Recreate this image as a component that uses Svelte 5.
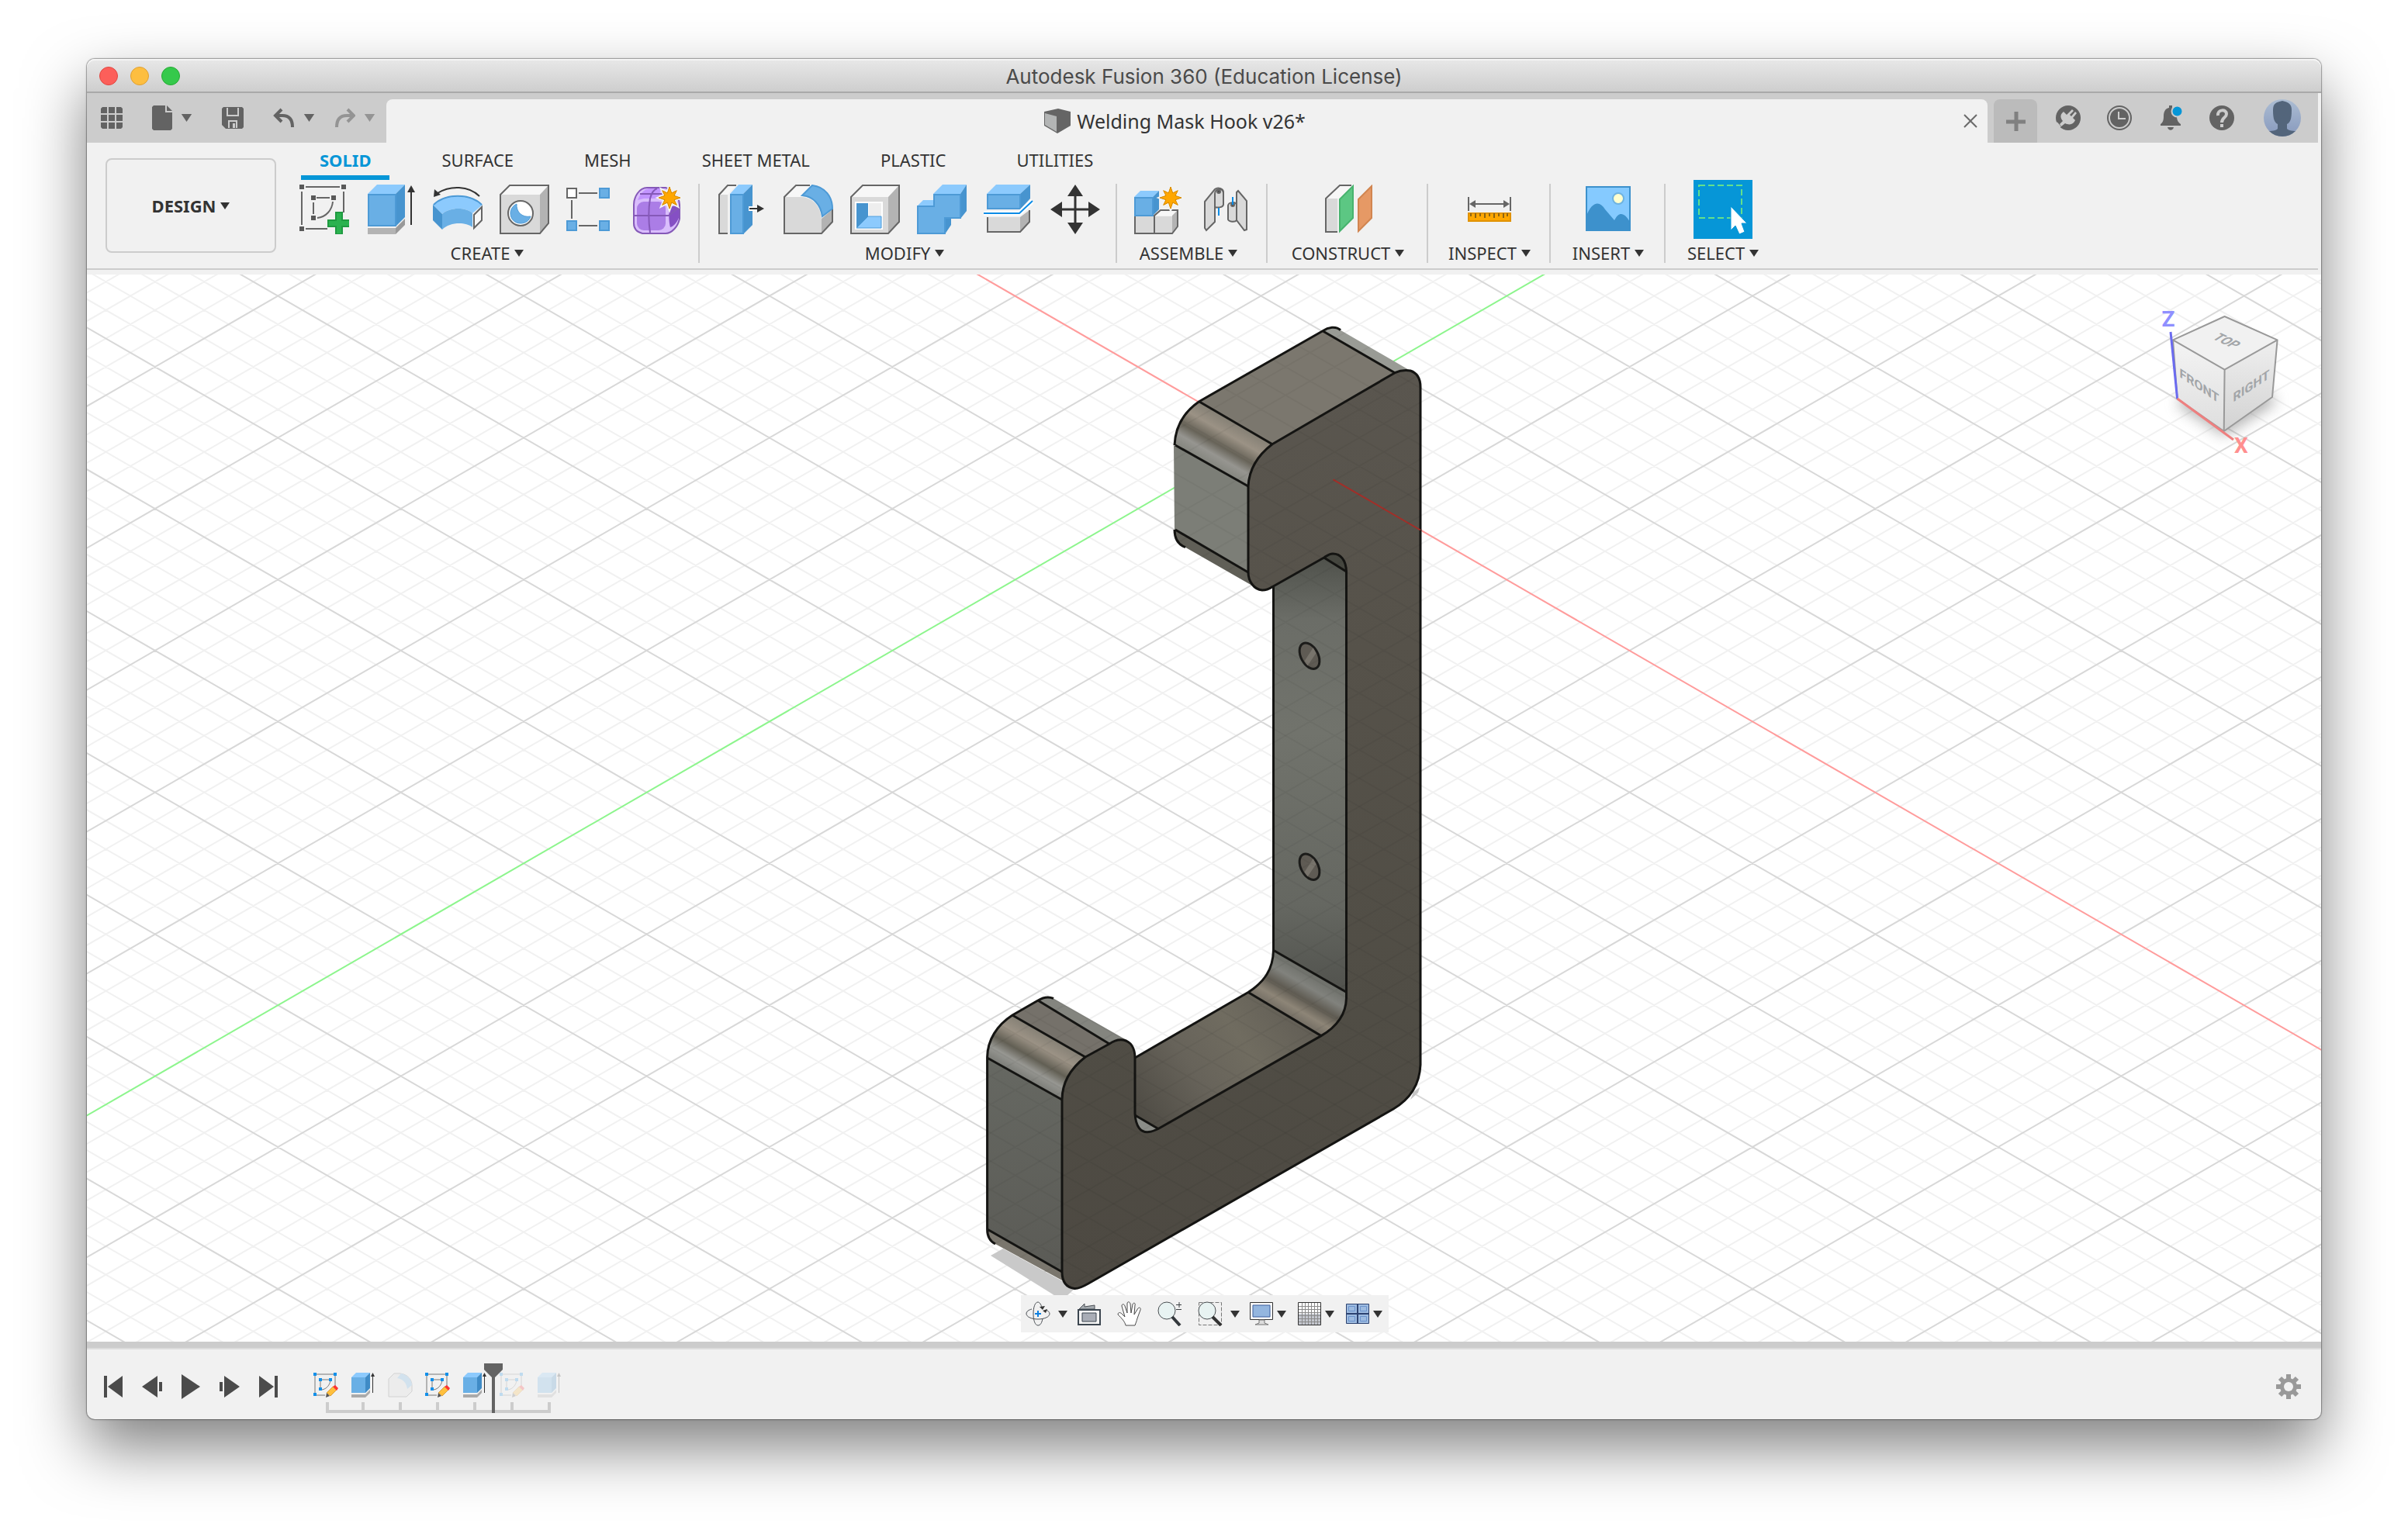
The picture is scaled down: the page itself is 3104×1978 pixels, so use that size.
<script lang="ts">
  const tabs = ['SOLID', 'SURFACE', 'MESH', 'SHEET METAL', 'PLASTIC', 'UTILITIES'];
  let activeTab = $state('SOLID');

  const groups = [
    { label: 'CREATE', tools: ['sketch', 'extrude', 'bend', 'hole', 'pattern', 'form'] },
    { label: 'MODIFY', tools: ['presspull', 'fillet', 'shell', 'combine', 'split', 'move'] },
    { label: 'ASSEMBLE', tools: ['component', 'joint'] },
    { label: 'CONSTRUCT', tools: ['plane'] },
    { label: 'INSPECT', tools: ['measure'] },
    { label: 'INSERT', tools: ['image'] },
    { label: 'SELECT', tools: ['select'] }
  ];

  const features = [
    { kind: 'sketch', state: 'on' },
    { kind: 'extrude', state: 'on' },
    { kind: 'fillet', state: 'dim' },
    { kind: 'sketch', state: 'on' },
    { kind: 'extrude', state: 'on' },
    { kind: 'sketch', state: 'dim' },
    { kind: 'extrude', state: 'dim' }
  ];

  // Isometric ground grid: one major cell is 2*CX by 2*CY, split in five.
  const OX = 1513.4;
  const OY = 210.5;
  const CX = 158.4;
  const CY = 91.45;

  function gridPath(major: boolean): string {
    let d = '';
    const slope = CY / CX;
    for (let i = -130; i <= 130; i++) {
      if ((i % 5 === 0) !== major || i === 0) continue;
      const c = OY + (i * 2 * CY) / 5;
      d += `M-1000 ${(c + slope * (-1000 - OX)).toFixed(1)}L4000 ${(c + slope * (4000 - OX)).toFixed(1)}`;
      d += `M-1000 ${(c - slope * (-1000 - OX)).toFixed(1)}L4000 ${(c - slope * (4000 - OX)).toFixed(1)}`;
    }
    return d;
  }
  const minor = gridPath(false);
  const major = gridPath(true);

  const front =
    'M1640 572.7L1798 480.7C1806 477 1812 477 1818 478C1827 481 1831 488 1831 499V1373C1830 1398 1818 1417 1796 1430L1403 1655C1396 1659 1390 1662 1385 1661.5C1374 1660 1369 1652 1369 1640V1418C1369 1396 1381 1377 1399 1363L1430 1346C1437 1341 1442 1340 1448 1341C1458 1343 1463 1352 1463 1364V1436C1464 1452 1470 1461 1481 1459.6C1486 1459 1490 1457 1493 1455.5L1703 1335.6C1723 1324 1735 1308 1735.5 1287V737C1735 722 1728 714 1718 714C1713 714 1710 717 1706.7 719L1640 756.7C1635 760 1631 761 1627 761C1616 760 1609 749 1609 738V627C1610 606 1620 588 1640 572.7Z';
  const silhouette =
    'M1545.7 517.7L1705 426.7C1712 422 1722 420 1728 425.7L1818 478C1827 481 1831 488 1831 499V1373C1830 1398 1818 1417 1796 1430L1403 1655C1390 1662 1385 1662 1378 1658L1283 1604C1275 1600 1272.6 1593 1272.6 1585V1363C1273 1341 1285 1322 1305 1309L1338 1290C1346 1285 1352 1285 1358 1287.4L1452 1341C1461 1344 1463 1352 1463 1364L1609 1279.5C1630 1266 1641 1250 1641 1226V756L1627 761L1528 705.7C1518 702 1514 693 1514 683V574C1515 552 1525 532 1545.7 517.7Z';
</script>

{#snippet caret()}
  <svg class="caret" viewBox="0 0 12 9" aria-hidden="true"><path d="M0 0H12L6 9Z" fill="currentColor" /></svg>
{/snippet}

{#snippet star()}
  <path
    d="M47 0L50.4 9.2L58.3 5.2L54.8 13.6L63 17L54.8 20.4L58.3 28.8L50.4 24.8L47 34L43.6 24.8L35.7 28.8L39.2 20.4L31 17L39.2 13.6L35.7 5.2L43.6 9.2Z"
    fill="#ffa700" stroke="#f2f2f2" stroke-width="2" />
  <path
    d="M47 3L49.7 11L56.3 7.7L53 14.3L61 17L53 19.7L56.3 26.3L49.7 23L47 31L44.3 23L37.7 26.3L41 19.7L33 17L41 14.3L37.7 7.7L44.3 11Z"
    fill="#ffa700" stroke="#d98c00" />
{/snippet}

{#snippet toolIcon(name: string)}
  <svg viewBox="0 0 64 64" aria-hidden="true">
    {#if name === 'sketch'}
      <path d="M8 3H52M3 9V52M57 9V36M8 57H36M22 17H39M18 23V38M43 22C42 33 34 42 23 43" fill="none" stroke="#666" stroke-width="2" />
      <path d="M0 0h6v6h-6zM54 0h6v6h-6zM0 54h6v6h-6zM15 14h6v6h-6zM41 14h6v6h-6zM15 40h6v6h-6z" fill="#595959" />
      <path d="M47 36h8v10h10v8h-10v10h-8v-10h-10v-8h10z" fill="#2bb24f" stroke="#1f9a41" stroke-width="2" />
    {:else if name === 'extrude'}
      <path d="M2 56H38V64H2Z" fill="#b3b3b3" /><path d="M38 56L50 44V52L38 64Z" fill="#999" />
      <path d="M2 12L14 0H50L38 12Z" fill="#8ccafd" /><path d="M38 12L50 0V42L38 54Z" fill="#4794cf" />
      <path d="M3 13H38V53H3Z" fill="#69afe5" stroke="#4d9ad6" stroke-width="2" />
      <path d="M58 8V52" stroke="#333" stroke-width="2" /><path d="M53 10H63L58 1Z" fill="#333" />
    {:else if name === 'bend'}
      <path d="M60 15C46 1 22 1 6 11" fill="none" stroke="#333" stroke-width="2" /><path d="M1 16L2 6L10 13Z" fill="#333" />
      <path d="M0 26C16 10 48 10 64 26L51 37C42 29 22 29 12 38Z" fill="#8ccafd" />
      <path d="M0 26L12 38V58L0 46Z" fill="#4794cf" />
      <path d="M12 38C22 29 42 29 51 37V55C42 48 22 48 12 58Z" fill="#69afe5" />
      <path d="M1 26C16 11 48 11 63 26" fill="none" stroke="#4d9ad6" stroke-width="2" />
      <path d="M53 39L63 29V46L53 56Z" fill="#f8f8f8" stroke="#666" stroke-width="2" />
    {:else if name === 'hole'}
      <path d="M1 13L13 1H63L52 13Z" fill="#f7f7f7" /><path d="M52 13L63 1V50L52 63Z" fill="#b3b3b3" /><path d="M1 13H52V63H1Z" fill="#d9d9d9" />
      <path d="M1 13L13 1H63V50L52 63H1Z" fill="none" stroke="#666" stroke-width="2" />
      <circle cx="27" cy="37" r="16" fill="#fff" stroke="#666" stroke-width="2" />
      <path d="M22 25C21 35 29 43 40 41C38 47 33 50 27 50C19 50 14 44 14 37C14 32 17 27 22 25Z" fill="#69afe5" stroke="#4d9ad6" />
    {:else if name === 'pattern'}
      <path d="M16 11H40M7 20V44M16 53H40" stroke="#666" stroke-width="2" />
      <path d="M1 5h12v12h-12z" fill="#fff" stroke="#666" stroke-width="2" />
      <path d="M43 5h12v12h-12zM1 47h12v12h-12zM43 47h12v12h-12z" fill="#69afe5" stroke="#4d9ad6" stroke-width="2" />
    {:else if name === 'form'}
      <path d="M1 26C1 16 8 4 18 4H42C50 6 60 16 60 26V44C58 54 50 63 42 63H12C4 61 1 56 1 50Z" fill="#d9bdfc" stroke="#8559b8" stroke-width="2" />
      <path d="M6 20C10 10 16 5 22 5H36C34 14 34 14 32 18H14Z" fill="#c294ff" />
      <rect x="5" y="22" width="37" height="37" rx="9" fill="#ab7de6" />
      <path d="M47 30C52 26 59 28 59 28V43C56 50 52 54 48 55C46 48 46 38 47 30Z" fill="#854fc4" />
      <path d="M2 40H46L59 30M22 62C20 48 20 30 22 18C24 10 28 6 31 5M9 12H38" fill="none" stroke="#8559b8" stroke-width="2" />
      {@render star()}
    {:else if name === 'presspull'}
      <g transform="translate(2 0)">
        <path d="M1 13L12 1H23L12 13V63H1Z" fill="#f7f7f7" /><path d="M1 13H12V63H1Z" fill="#d9d9d9" />
        <path d="M23 1H12L1 13V63H12" fill="none" stroke="#666" stroke-width="2" />
        <path d="M15 12L26 0H44L32 12Z" fill="#8ccafd" /><path d="M32 12L44 0V52L32 64Z" fill="#4794cf" />
        <path d="M16 13H32V63H16Z" fill="#69afe5" stroke="#4d9ad6" stroke-width="2" />
        <path d="M39 31H52" stroke="#fff" stroke-width="6" /><path d="M40 31H52" stroke="#333" stroke-width="2" /><path d="M50 26L59 31L50 36Z" fill="#333" />
      </g>
    {:else if name === 'fillet'}
      <path d="M1 16L16 1H35L25 16Z" fill="#f7f7f7" />
      <path d="M1 16H24C40 18 48 30 49 46V63H1Z" fill="#d9d9d9" /><path d="M49 44L63 32V48L49 63Z" fill="#b3b3b3" />
      <path d="M34 1H16L1 16V63H49L63 48V31" fill="none" stroke="#666" stroke-width="2" />
      <path d="M24 14L37 1C54 3 63 16 63 31L50 41C48 26 38 15 24 14Z" fill="#69afe5" stroke="#4d9ad6" stroke-width="2" />
    {:else if name === 'shell'}
      <path d="M1 16L16 1H63L49 16Z" fill="#f7f7f7" /><path d="M49 16L63 1V48L49 63Z" fill="#b3b3b3" /><path d="M1 16H49V63H1Z" fill="#d9d9d9" />
      <path d="M1 16L16 1H63V48L49 63H1Z" fill="none" stroke="#666" stroke-width="2" />
      <path d="M6 22H42V58H6Z" fill="#fff" /><path d="M8 24H23V42L8 56Z" fill="#4794cf" /><path d="M8 56L23 41H40V56Z" fill="#8ccafd" stroke="#4d9ad6" />
      <path d="M24 24H40V40H24Z" fill="#eee" />
    {:else if name === 'combine'}
      <path d="M21 12L33 0H64L56 12Z" fill="#8ccafd" /><path d="M0 28L8 20H21V28Z" fill="#8ccafd" />
      <path d="M56 12L64 0V34L56 44H44V52L36 64V44H56Z" fill="#4794cf" />
      <path d="M22 13H56V43H36V63H1V28H22Z" fill="#69afe5" stroke="#4d9ad6" stroke-width="2" />
    {:else if name === 'split'}
      <path d="M4 12L16 0H60L47 12Z" fill="#8ccafd" /><path d="M47 12L60 0V18L47 32Z" fill="#4794cf" /><path d="M5 13H47V31H5Z" fill="#69afe5" stroke="#4d9ad6" stroke-width="2" />
      <path d="M47 42L59 33V47L47 61Z" fill="#b3b3b3" /><path d="M5 42H47V61H5Z" fill="#d9d9d9" />
      <path d="M5 42V61H47L59 48V33" fill="none" stroke="#666" stroke-width="2" />
      <path d="M0 37H46L63 21" fill="none" stroke="#fff" stroke-width="6" /><path d="M0 37H46L63 21" fill="none" stroke="#0d8ce6" stroke-width="2" />
    {:else if name === 'move'}
      <path d="M32 10V54M10 32H54" stroke="#333" stroke-width="3" />
      <path d="M32 0L42 15H22ZM32 64L42 49H22ZM0 32L15 22V42ZM64 32L49 22V42Z" fill="#333" />
    {:else if name === 'component'}
      <path d="M0 16L8 8H32L24 16Z" fill="#8ccafd" /><path d="M24 16L32 8V32L24 40Z" fill="#4794cf" /><path d="M1 17H24V40H1Z" fill="#69afe5" stroke="#4d9ad6" stroke-width="2" />
      <path d="M26 40L34 33H56L49 40Z" fill="#f7f7f7" /><path d="M49 40L56 33V54L49 63Z" fill="#b3b3b3" /><path d="M1 41H49V63H1Z" fill="#d9d9d9" />
      <path d="M1 41V63H49L56 54V33H34L26 40V63" fill="none" stroke="#666" stroke-width="2" />
      {@render star()}
    {:else if name === 'joint'}
      <g transform="translate(4 0)" stroke="#666" stroke-width="2">
        <path d="M1 22L14 6C18 3 25 5 25 10V26C24 30 17 30 14 29V48L3 59L1 56Z" fill="#d9d9d9" />
        <path d="M14 12V30M14 12C14 4 25 4 25 11" fill="none" /><circle cx="19" cy="9" r="2" fill="#444" />
        <path d="M42 26V10L44 8L55 21V58L52 59L42 46C40 49 32 48 31 45V27C32 22 41 22 42 26Z" fill="#d9d9d9" />
        <path d="M42 26V46" fill="none" /><circle cx="37" cy="26" r="2" fill="#444" />
        <path d="M19 30V40M37 16V26" stroke="#0d8ce6" />
      </g>
    {:else if name === 'plane'}
      <g transform="translate(2 0)">
        <path d="M1 18L19 1H35L18 18Z" fill="#f7f7f7" /><path d="M1 18H16V61H1Z" fill="#d9d9d9" /><path d="M34 1H19L1 18V61H16" fill="none" stroke="#666" stroke-width="2" />
        <path d="M19 19L36 2V43L19 60Z" fill="#5cc783" stroke="#47b36e" stroke-width="2" /><path d="M43 19L60 2V43L43 60Z" fill="#e69965" stroke="#d18550" stroke-width="2" />
      </g>
    {:else if name === 'measure'}
      <g transform="translate(4 0)">
        <path d="M1 16V34M55 16V34M6 25H50" stroke="#666" stroke-width="2" /><path d="M2 25L10 20V30ZM54 25L46 20V30Z" fill="#666" />
        <path d="M1 37H55V47H1Z" fill="#ffa700" stroke="#e09200" stroke-width="2" />
        <path d="M4 37V41M10 37V43M16 37V41M22 37V43M28 37V41M34 37V43M40 37V41M46 37V43M51 37V41" stroke="#8c6414" stroke-width="2" />
      </g>
    {:else if name === 'image'}
      <g transform="translate(3 0)">
        <path d="M1 3H57V59H1Z" fill="#85caff" stroke="#3d91cc" stroke-width="2" />
        <circle cx="42" cy="18" r="7" fill="#ffffcf" stroke="#6fb3e0" stroke-width="2" />
        <path d="M1 40C8 22 18 20 25 32L37 46C43 34 50 36 57 48V59H1Z" fill="#3d91cc" />
      </g>
    {/if}
  </svg>
{/snippet}

{#snippet featureIcon(name: string)}
  <svg viewBox="0 0 32 32" aria-hidden="true">
    {#if name === 'sketch'}
      <path d="M3 2H26M2 4V27M28 4V17M4 29H15M10 9H20M9 11V19M22 10C21 16 17 21 11 22" fill="none" stroke="#777" />
      <path d="M0 0h4v4h-4zM26 0h4v4h-4zM0 26h4v4h-4zM7 7h4v4h-4zM20 7h4v4h-4zM7 19h4v4h-4z" fill="#1290ea" />
      <path d="M17 26L25 18L30 22L22 30Z" fill="#ffbf3d" stroke="#d9a040" /><path d="M25 18L28 16L32 20L30 23Z" fill="#f33" /><path d="M16 32L17 26L21 30Z" fill="#555" />
    {:else if name === 'extrude'}
      <path d="M1 28H19L25 22V26L19 32H1Z" fill="#aaa" /><path d="M1 6L7 0H25L19 6Z" fill="#8ccafd" /><path d="M19 6L25 0V20L19 26Z" fill="#3f8bc6" /><path d="M1 6H19V26H1Z" fill="#69afe5" />
      <path d="M28.500 4V26" stroke="#333" /><path d="M26 5L28.500 0L31 5Z" fill="#333" />
    {:else}
      <path d="M1 8L8 1H16C26 2 31 10 31 16V24L24 31H1Z" fill="#ddd" stroke="#666" /><path d="M12 7L17 1C26 3 31 10 31 16L25 21C24 13 19 8 12 7Z" fill="#69afe5" />
    {/if}
  </svg>
{/snippet}

<div class="desktop">
  <main class="window">
    <header class="titlebar">
      <div class="lights">
        <button class="light close" aria-label="Close"></button>
        <button class="light minimize" aria-label="Minimize"></button>
        <button class="light zoom" aria-label="Zoom"></button>
      </div>
      <h1>Autodesk Fusion 360 (Education License)</h1>
    </header>

    <div class="strip">
      <div class="quick">
        <button class="q-grid" aria-label="Data panel">
          <svg viewBox="0 0 28 28" width="28" height="28"><path d="M2 0h6v8h-8v-6zM10 0h8v8h-8zM20 0h6l2 2v6h-8zM0 10h8v8h-8zM10 10h8v8h-8zM20 10h8v8h-8zM0 20h8v8h-6l-2-2zM10 20h8v8h-8zM20 20h8v6l-2 2h-6z" fill="#636363" /></svg>
        </button>
        <button class="q-file" aria-label="File">
          <svg viewBox="0 0 26 32" width="26" height="32"><path d="M2 0H17V9H26V30L24 32H2L0 30V2Z" fill="#636363" /><path d="M19 0L26 7H19Z" fill="#636363" /></svg>
          {@render caret()}
        </button>
        <button class="q-save" aria-label="Save">
          <svg viewBox="0 0 28 28" width="28" height="28"><path d="M2 0H26L28 2V26L26 28H5L0 23V2Z" fill="#636363" /><path d="M7 1V11H21V1M9 27V18H19V27" fill="none" stroke="#ccc" stroke-width="2" /><path d="M14 21h3v6h-3z" fill="#ccc" /></svg>
        </button>
        <button class="q-undo" aria-label="Undo">
          <svg viewBox="0 0 28 26" width="28" height="26"><path d="M11 2L3 10L11 18M4 10H12C21 10 25 15 25 25" fill="none" stroke="#636363" stroke-width="4" /></svg>
          {@render caret()}
        </button>
        <button class="q-redo" aria-label="Redo">
          <svg viewBox="0 0 28 26" width="28" height="26"><path d="M18 2L26 10L18 18M25 10H17C8 10 4 15 4 25" fill="none" stroke="#949494" stroke-width="4" /></svg>
          {@render caret()}
        </button>
      </div>
      <div class="doc-tab">
        <div class="doc-name">
          <svg viewBox="0 0 34 32" width="34" height="32"><path d="M0 4L18 0L34 4V22L17 32L0 22Z" fill="#656565" /><path d="M1 6L16 10V30L1 21Z" fill="#b3b5b5" /></svg>
          <span>Welding Mask Hook v26*</span>
        </div>
        <button class="doc-close" aria-label="Close document">
          <svg viewBox="0 0 18 18" width="18" height="18"><path d="M1 1L17 17M17 1L1 17" stroke="#6b6b6b" stroke-width="2" /></svg>
        </button>
      </div>
      <button class="doc-new" aria-label="New design">
        <svg viewBox="0 0 26 26" width="26" height="26"><path d="M14 1V26M1 14H26" stroke="#808080" stroke-width="5" /></svg>
      </button>
      <div class="status">
        <button aria-label="Extensions">
          <svg viewBox="0 0 32 32" width="32" height="32"><circle cx="16" cy="16" r="16" fill="#636363" /><path d="M5 24L9 20C5 15 6 11 10 8L14 12L21 5L23 7L18 12L20 14L25 8L27 10L22 16L25 19C23 24 18 26 12 23L7 27Z" fill="#ccc" /><path d="M1 22L6 28" stroke="#ccc" stroke-width="2" /></svg>
        </button>
        <button aria-label="Job status">
          <svg viewBox="0 0 32 32" width="32" height="32"><circle cx="16" cy="16" r="15" fill="#ccc" stroke="#636363" stroke-width="2" /><circle cx="16" cy="16" r="12" fill="#636363" /><path d="M15 8V17H24" fill="none" stroke="#ccc" stroke-width="2" /></svg>
        </button>
        <button aria-label="Notifications">
          <svg viewBox="0 0 32 32" width="32" height="32"><path d="M14 0H18V3C23 4 24 8 24 14C24 19 26 22 29 24V26H3V24C6 22 7 19 7 14C7 8 9 4 14 3ZM12 28H20C19 33 13 33 12 28Z" fill="#636363" /><circle cx="24.500" cy="7.500" r="7" fill="#0696d7" stroke="#ccc" stroke-width="2" /></svg>
        </button>
        <button aria-label="Help">
          <svg viewBox="0 0 32 32" width="32" height="32"><circle cx="16" cy="16" r="16" fill="#636363" /><path d="M11 13C10 5 22 4 22 11C22 16 16 15 16 22M16 24V28" fill="none" stroke="#ccc" stroke-width="4" /></svg>
        </button>
        <button class="avatar" aria-label="Account">
          <svg viewBox="0 0 48 48" width="48" height="48"><defs><linearGradient id="sky" x2="0" y2="1"><stop stop-color="#acbdd3" /><stop offset="1" stop-color="#8799bd" /></linearGradient><clipPath id="disc"><circle cx="24" cy="24" r="24" /></clipPath></defs><g clip-path="url(#disc)"><path d="M0 0H48V48H0Z" fill="url(#sky)" /><path d="M12 14C12 5 16 4 24 2C32 4 36 6 36 14C36 26 34 30 30 32V38C34 42 40 40 48 42V48H0V42C8 40 14 42 18 38V32C14 30 12 26 12 14Z" fill="#53657b" /></g></svg>
        </button>
      </div>
    </div>

    <section class="ribbon" aria-label="Toolbar">
      <button class="workspace">DESIGN {@render caret()}</button>
      <div class="ribbon-main">
        <nav class="tabs">
          {#each tabs as tab}
            <button class="tab" class:active={tab === activeTab} onclick={() => (activeTab = tab)}>{tab}</button>
          {/each}
        </nav>
        <div class="groups">
          {#each groups as group}
            <div class="group" class:many={group.tools.length > 1}>
              <div class="tools">
                {#each group.tools as tool}
                  {#if tool === 'select'}
                    <button class="tool selected" aria-label="Select">
                      <svg viewBox="0 0 76 76" aria-hidden="true"><path d="M7 7H62V49H7Z" fill="none" stroke="#63e08c" stroke-width="2" stroke-dasharray="8 4" /><path d="M48 34L69 56H62L66 67L59 70L54 59L48 65Z" fill="#fff" stroke="#0696d7" /></svg>
                    </button>
                  {:else}
                    <button class="tool" aria-label={tool}>{@render toolIcon(tool)}</button>
                  {/if}
                {/each}
              </div>
              <button class="group-label">{group.label}{@render caret()}</button>
            </div>
          {/each}
        </div>
      </div>
    </section>

    <section class="viewport" aria-label="Model view">
      <svg class="scene" viewBox="0 0 2880 1376" preserveAspectRatio="xMidYMid slice" role="img" aria-label="Welding mask hook model">
        <defs>
          <clipPath id="solid"><path d={silhouette} transform="translate(-112 -354)" /></clipPath>
          <linearGradient id="body" gradientUnits="userSpaceOnUse" x1="0" y1="480" x2="0" y2="1660"><stop stop-color="#5a564f" /><stop offset=".3" stop-color="#56524a" /><stop offset=".7" stop-color="#504d45" /><stop offset="1" stop-color="#4d4942" /></linearGradient>
          <linearGradient id="bandA" gradientUnits="userSpaceOnUse" x1="1640" y1="573" x2="1609" y2="627"><stop stop-color="#858075" /><stop offset=".28" stop-color="#9b9285" /><stop offset=".56" stop-color="#676358" /><stop offset=".78" stop-color="#969590" /><stop offset="1" stop-color="#85867f" /></linearGradient>
          <linearGradient id="bandB" gradientUnits="userSpaceOnUse" x1="1399" y1="1363" x2="1368" y2="1417"><stop stop-color="#858075" /><stop offset=".28" stop-color="#9b9285" /><stop offset=".56" stop-color="#625f54" /><stop offset=".78" stop-color="#979792" /><stop offset="1" stop-color="#7d7e79" /></linearGradient>
          <linearGradient id="bandC" gradientUnits="userSpaceOnUse" x1="1735" y1="1279" x2="1703" y2="1334"><stop stop-color="#6c6e68" /><stop offset=".3" stop-color="#81827d" /><stop offset=".55" stop-color="#5f5b52" /><stop offset=".8" stop-color="#8d8577" /><stop offset="1" stop-color="#756f65" /></linearGradient>
          <linearGradient id="wall" gradientUnits="userSpaceOnUse" x1="0" y1="720" x2="0" y2="1280"><stop stop-color="#50524c" /><stop offset=".14" stop-color="#6b6d67" /><stop offset=".4" stop-color="#71736c" /><stop offset=".8" stop-color="#656761" /><stop offset="1" stop-color="#51524d" /></linearGradient>
          <linearGradient id="floor" gradientUnits="userSpaceOnUse" x1="1463" y1="1440" x2="1660" y2="1300"><stop stop-color="#4d4a43" /><stop offset=".4" stop-color="#67635a" /><stop offset=".7" stop-color="#706c60" /><stop offset="1" stop-color="#646057" /></linearGradient>
          <linearGradient id="sideLow" x2="0" y2="1"><stop stop-color="#666862" /><stop offset="1" stop-color="#5b5b56" /></linearGradient>
        </defs>
        <path d={minor} class="line minor" />
        <path d={major} class="line major" />
        <g transform="translate(-112 -354)">
          <path d="M-1000 2080.500L4000 -806.600" stroke="#8df58d" stroke-width="2" />
          <path d="M-1000 -951L4000 1935.500" stroke="#ff9c9c" stroke-width="2" />
          <path d="M1277 1619L1293 1610L1386 1661L1374 1672H1362Z" fill="#c9c9c9" />
          <path d="M1822 1408L1830 1402L1828 1409L1818 1418Z" fill="#c4c4c4" />

          <path d="M1545.700 517.700L1705 426.700L1798 480.700L1640 572.700Z" fill="#7b776e" />
          <path d="M1705 426.700C1712 422 1722 420 1728 425.700L1818 478C1811 477 1805 477 1798 480.700Z" fill="#999b95" />
          <path d="M1545.700 517.700C1525 532 1515 552 1514 574L1609 627C1610 606 1620 588 1640 572.700Z" fill="url(#bandA)" />
          <path d="M1513 574L1609 627V738L1514 683Z" fill="#7c7e77" />
          <path d="M1514 683L1609 738C1609 745 1611 750 1614 755L1528 705.700C1518 702 1514 693 1514 683Z" fill="#605f57" />
          <path d="M1641 700H1736V1279L1641 1225Z" fill="url(#wall)" />
          <path d="M1706 719L1735.500 737C1735 722 1724 708 1706 719Z" fill="#45463f" />
          <path d="M1641 1225L1735.500 1279C1735 1308 1723 1324 1703 1335.600L1609 1279.500C1630 1266 1641 1250 1641 1225Z" fill="url(#bandC)" />
          <path d="M1609 1279.500L1703 1335.600L1493 1455.500L1463 1438V1364Z" fill="url(#floor)" />
          <path d="M1463 1438L1493 1455.500L1481 1460C1470 1461 1464 1452 1463 1438Z" fill="#8b8d88" />
          <path d="M1305 1309L1338 1290L1430 1346L1399 1363Z" fill="#75716a" />
          <path d="M1338 1290C1346 1285 1352 1285 1358 1287.400L1452 1341C1442 1340 1437 1341 1430 1346Z" fill="#84857f" />
          <path d="M1305 1309C1285 1322 1273 1341 1272.600 1363L1369 1418C1369 1396 1381 1377 1399 1363Z" fill="url(#bandB)" />
          <path d="M1272.600 1363L1369 1418V1640L1272.600 1585Z" fill="url(#sideLow)" />
          <path d="M1272.600 1585L1369 1640L1371 1652L1283 1604C1275 1600 1272.600 1593 1272.600 1585Z" fill="#7a766d" />
          <path d={front} fill="url(#body)" />

          <g class="edges">
            <path d={front} />
            <path d="M1514 574C1515 552 1525 532 1545.700 517.700L1705 426.700C1712 422 1722 420 1728 425.700M1545.700 517.700L1640 572.700M1705 426.700L1798 480.700M1515 574L1609 627M1515 683L1609 738M1514 683C1514 693 1518 702 1528 705.700" />
            <path d="M1641.500 757V1225C1641 1250 1630 1266 1609 1279.500L1463 1364M1641 1225L1735 1279M1609 1279.500L1703 1335.600M1706.700 719L1735.500 737M1463 1438L1493 1455.500" />
            <path d="M1283 1604C1275 1600 1272.600 1593 1272.600 1585V1363C1273 1341 1285 1322 1305 1309L1338 1290C1346 1285 1352 1285 1358 1287.400M1305 1309L1399 1363M1338 1290L1430 1346M1272.600 1364L1369 1418M1272.600 1585L1369 1640" />
          </g>
          {#each [845.7, 1117.7] as cy}
            <g transform="translate(1688 {cy}) rotate(-28)">
              <ellipse rx="11" ry="18" fill="#5f5b54" stroke="#1c1c1a" stroke-width="3" />
              <path d="M-9 3L9 -7V1L-8 10Z" fill="#78746c" />
            </g>
          {/each}
          <path d="M1718.500 618.300L1831 683.500" stroke="#a32e28" stroke-width="2" />
        </g>
        <g clip-path="url(#solid)">
          <path d={minor} class="line over" />
          <path d={major} class="line over" />
        </g>
      </svg>

      <svg class="cube" viewBox="2780 390 170 210" width="170" height="210" role="img" aria-label="View cube">
        <defs>
          <filter id="soft" x="-40%" y="-40%" width="180%" height="180%"><feGaussianBlur stdDeviation="9" /></filter>
          <linearGradient id="cf" x2="0" y2="1"><stop stop-color="#f4f4f4" /><stop offset="1" stop-color="#dedede" /></linearGradient>
          <linearGradient id="cr" x2="0" y2="1"><stop stop-color="#efefef" /><stop offset="1" stop-color="#d2d2d2" /></linearGradient>
        </defs>
        <path d="M2806 522L2867 562L2936 518L2900 490H2830Z" fill="#777" opacity=".55" filter="url(#soft)" />
        <path d="M2867.600 408L2935.600 438.400L2867.600 476.600L2801 438.400Z" fill="#f1f1f1" />
        <path d="M2801 438.400L2867.600 476.600L2866.700 556L2806.600 514Z" fill="url(#cf)" />
        <path d="M2867.600 476.600L2935.600 438.400L2929 512L2866.700 556Z" fill="url(#cr)" />
        <path d="M2801 438.400L2867.600 408L2935.600 438.400L2929 512L2866.700 556L2806.600 514ZM2801 438.400L2867.600 476.600L2935.600 438.400M2867.600 476.600L2866.700 556" fill="none" stroke="#999" stroke-width="2" stroke-linejoin="round" />
        <g class="cube-text">
          <text transform="translate(2835 503) skewY(34)">FRONT</text>
          <text transform="translate(2902 503) skewY(-34)">RIGHT</text>
          <text transform="translate(2865 443) rotate(26) skewX(-32)">TOP</text>
        </g>
        <path d="M2798 428L2806.600 514" stroke="#6b6bf0" stroke-width="3" />
        <path d="M2806.600 514L2879 567" stroke="#ee7f7f" stroke-width="3" />
        <text class="axis" x="2795" y="421" fill="#8f8fff">Z</text>
        <text class="axis" x="2889" y="584" fill="#ff8f8f">X</text>
      </svg>

      <div class="navbar">
        <button aria-label="Orbit">
          <svg viewBox="0 0 32 32"><g fill="none" stroke="#4a4f54"><path d="M22 22C21 28 19 31 16 31C12 31 10 24 10 16C10 8 12 1 16 1C18 1 20 4 21 8" /><path d="M8 10C4 11 1 13 1 16C1 20 8 23 16 23C24 23 31 20 31 16C31 14 29 12 26 11" /></g><path d="M18 7L25 6L22 11ZM22 12L28 10L26 15Z" fill="#333" /><path d="M16 12V20M12 16H20" stroke="#0d7fe0" stroke-width="2" /></svg>
        </button>
        <button class="drop wide" aria-label="Orbit options">{@render caret()}</button>
        <button aria-label="Look at">
          <svg viewBox="0 0 32 32"><path d="M3 10L10 3V7L23 5V10Z" fill="#a5abb0" stroke="#4a4f54" /><path d="M2 11H30V30H2Z" fill="#f4f4f4" stroke="#3c4650" stroke-width="2" /><path d="M7 15H25V26H7Z" fill="#a9adb6" stroke="#3c4650" /></svg>
        </button>
        <button class="apart" aria-label="Pan">
          <svg viewBox="0 0 32 32"><path d="M11 31C10 26 6 22 1 17C1 14 4 14 6 16L10 20L6 6C6 3 9 3 10 6L13 15L13 3C13 0 16 0 17 3L18 15L20 4C21 1 24 2 23 5L22 17L27 9C29 7 31 9 30 11L26 22C25 26 24 28 23 31Z" fill="#fff" stroke="#4a4a4a" /></svg>
        </button>
        <button class="apart" aria-label="Zoom">
          <svg viewBox="0 0 32 32"><circle cx="12" cy="12" r="11" fill="#e8f3f2" stroke="#4a4f52" /><path d="M19 20L29 31" stroke="#33383c" stroke-width="4" /><path d="M28 1V8M24 4.500H31M24 10.500H31" stroke="#3c4043" /></svg>
        </button>
        <button class="apart" aria-label="Fit">
          <svg viewBox="0 0 32 32"><path d="M1.500 1.500H30.500V30.500H1.500Z" fill="none" stroke="#777" stroke-dasharray="5 2" /><circle cx="12" cy="12" r="11" fill="#e8f3f2" stroke="#4a4f52" /><path d="M19 20L30 31" stroke="#333" stroke-width="4" /></svg>
        </button>
        <button class="drop wide" aria-label="Fit options">{@render caret()}</button>
        <button aria-label="Display settings">
          <svg viewBox="0 0 32 32"><path d="M1.500 1.500H30.500V23.500H1.500Z" fill="#f7f7f7" stroke="#333" /><path d="M5 5H27V20H5Z" fill="#94b6df" stroke="#3a5ea0" /><path d="M13 24H20V28L25 30H8L13 28Z" fill="#ddd" stroke="#777" /></svg>
        </button>
        <button class="drop" aria-label="Display options">{@render caret()}</button>
        <button aria-label="Grid and snaps">
          <svg viewBox="0 0 32 32"><path d="M2 2H30V30H2Z" fill="#fff" /><path d="M2 16H30V30H2Z" fill="#c3c6ce" /><path d="M6.500 2V30M10.500 2V30M14.500 2V30M18.500 2V30M22.500 2V30M26.500 2V30M2 6.500H30M2 10.500H30M2 14.500H30M2 18.500H30M2 22.500H30M2 26.500H30" stroke="#8a8a8a" /><path d="M1.500 1.500H30.500V30.500H1.500Z" fill="none" stroke="#333" /></svg>
        </button>
        <button class="drop" aria-label="Grid options">{@render caret()}</button>
        <button aria-label="Viewports">
          <svg viewBox="0 0 32 32"><path d="M1.500 3.500H30.500V28.500H1.500Z" fill="#9dbbe0" stroke="#2c4270" /><path d="M16 4V28M2 16H30" stroke="#2c4270" stroke-width="2" /><path d="M4.500 6.500H12.500V12.500H4.500ZM19.500 6.500H27.500V12.500H19.500ZM4.500 19.500H12.500V25.500H4.500ZM19.500 19.500H27.500V25.500H19.500Z" fill="none" stroke="#6b93cc" /></svg>
        </button>
        <button class="drop" aria-label="Viewport options">{@render caret()}</button>
      </div>
    </section>

    <footer class="timeline">
      <div class="playback">
        <button aria-label="To beginning"><svg viewBox="0 0 32 32"><path d="M4 2H8V30H4ZM28 2V30L9 16Z" fill="#4b4b4b" /></svg></button>
        <button aria-label="Step back"><svg viewBox="0 0 32 32"><path d="M3 16L23 2V30ZM25 10H29V22H25Z" fill="#4b4b4b" /></svg></button>
        <button aria-label="Play"><svg viewBox="0 0 32 32"><path d="M4 0L28 16L4 32Z" fill="#4b4b4b" /></svg></button>
        <button aria-label="Step forward"><svg viewBox="0 0 32 32"><path d="M3 10H7V22H3ZM9 2L29 16L9 30Z" fill="#4b4b4b" /></svg></button>
        <button aria-label="To end"><svg viewBox="0 0 32 32"><path d="M4 2L23 16L4 30ZM24 2H28V30H24Z" fill="#4b4b4b" /></svg></button>
      </div>
      <div class="history">
        {#each features as feature}
          <div class="feature">
            <button class:dim={feature.state === 'dim'} aria-label={feature.kind}>{@render featureIcon(feature.kind)}</button>
            <span class="tick"></span>
          </div>
        {/each}
        <svg class="marker" viewBox="0 0 24 64" width="24" height="64" aria-hidden="true"><path d="M0 0H24V8L14 18V64H10V18L0 8Z" fill="#636363" /></svg>
      </div>
      <button class="gear" aria-label="Timeline settings">
        <svg viewBox="0 0 32 32" width="32" height="32"><path d="M16 0V32M0 16H32M5 5L27 27M27 5L5 27" stroke="#999" stroke-width="6" /><circle cx="16" cy="16" r="11" fill="#999" /><circle cx="16" cy="16" r="6" fill="#f1f1f1" /></svg>
      </button>
    </footer>
  </main>
</div>

<style>
  :global(body) { margin: 0; background: #fff; }
  * { box-sizing: border-box; }
  button { display: flex; align-items: center; justify-content: center; padding: 0; border: 0; background: none; font: inherit; color: inherit; cursor: pointer; }
  svg { display: block; flex: none; }
  .caret { width: 12px; height: 9px; }

  .desktop { min-height: 100vh; padding: 76px 112px 148px; display: flex; font-family: 'Noto Sans', 'Open Sans', sans-serif; font-size: 22px; line-height: 28px; color: #333; overflow: hidden; }
  .window { flex: 1; min-width: 0; display: flex; flex-direction: column; background: #f1f1f1; border-radius: 10px; box-shadow: 0 0 0 1px rgba(0, 0, 0, 0.22), 0 0 3px rgba(0, 0, 0, 0.35), 0 36px 80px rgba(0, 0, 0, 0.5); }

  .titlebar { position: relative; height: 44px; display: flex; align-items: center; padding: 2px 16px 0; border-radius: 10px 10px 0 0; border-bottom: 2px solid #a9a9a9; background: linear-gradient(#e8e8e8, #cecece); box-shadow: inset 0 2px #f5f5f5; }
  .lights { display: flex; gap: 16px; flex: 1; }
  .light { width: 24px; height: 24px; border-radius: 50%; border: 1px solid; }
  .close { background: #fc5f5a; border-color: #e24640; }
  .minimize { background: #fdbe40; border-color: #dfa033; }
  .zoom { background: #35c94b; border-color: #27aa35; }
  h1 { margin: 0; padding-top: 1px; font: 400 26px/32px Inter, sans-serif; color: #4a4a4a; }
  .titlebar::after { content: ''; flex: 1; }

  .strip { height: 64px; margin-right: 4px; display: flex; align-items: flex-end; background: #ccc; }
  .quick { width: 386px; height: 64px; padding-left: 18px; display: flex; align-items: center; gap: 38px; color: #636363; }
  .quick .caret { width: 15px; height: 10px; }
  .q-file, .q-undo, .q-redo { gap: 11px; }
  .q-redo { margin-left: -14px; color: #949494; }
  .doc-tab { flex: 1; height: 56px; display: flex; align-items: center; background: #f1f1f1; border-radius: 8px 8px 0 0; padding-right: 13px; }
  .doc-name { flex: 1; display: flex; align-items: center; justify-content: center; gap: 8px; font-size: 25px; }
  .doc-new { width: 56px; height: 56px; margin-left: 8px; background: #bbb; border-radius: 8px 8px 0 0; }
  .status { height: 64px; display: flex; align-items: center; gap: 34px; padding: 0 22px 0 24px; }
  .status .avatar { margin-left: 4px; }

  .ribbon { height: 170px; display: flex; margin-right: 4px; box-shadow: inset 0 -6px #f1f1f1, inset 0 -8px #ccc; }
  .workspace { width: 220px; height: 122px; margin: 20px 0 0 24px; gap: 6px; border: 2px solid #ccc; border-radius: 8px; font-weight: 700; }
  .ribbon-main { flex: 1; min-width: 0; padding-left: 18px; }
  .tabs { display: flex; gap: 43px; padding-left: 14px; }
  .tab { height: 48px; padding: 1px 24px 0; border-bottom: 6px solid transparent; }
  .tab.active { color: #0696d7; font-weight: 700; border-color: #0696d7; }
  .groups { display: flex; }
  .group { position: relative; height: 114px; padding: 0 28px; display: flex; flex-direction: column; align-items: center; }
  .group.many { padding: 0 22px; }
  .group.many:first-child { padding-left: 12px; }
  .group:nth-child(4) { width: 207px; }
  .group:nth-child(5) { width: 158px; }
  .group:nth-child(6) { width: 148px; }
  .group:nth-child(n + 4) { padding: 0; }
  .group:last-child { padding: 0 28px; }
  .group:not(:last-child)::after { content: ''; position: absolute; right: 0; top: 5px; width: 2px; height: 102px; background: #ccc; }
  .tools { height: 76px; display: flex; align-items: center; gap: 22px; }
  .tool svg { width: 64px; height: 64px; }
  .tool.selected, .tool.selected svg { width: 76px; height: 76px; background: #0696d7; }
  .group-label { margin-top: 4px; gap: 6px; }
  .many .group-label { margin-right: 10px; }

  .viewport { position: relative; flex: 1; min-height: 600px; background: #fff; display: flex; align-items: flex-end; justify-content: center; padding-bottom: 12px; overflow: hidden; }
  .scene { position: absolute; inset: 0; width: 100%; height: 100%; }
  .line { fill: none; stroke-width: 2; }
  .minor { stroke: #f1f1f1; }
  .major { stroke: #d8d8d8; }
  .over { stroke: #000; opacity: 0.04; }
  .edges { fill: none; stroke: #141412; stroke-width: 3; stroke-linejoin: round; }
  .cube { position: absolute; top: 36px; right: 42px; }
  .cube-text { font: 700 16px Roboto, sans-serif; fill: #a2a5a8; text-anchor: middle; }
  .axis { font: 700 28px Roboto, sans-serif; text-anchor: middle; }

  .navbar { position: relative; height: 48px; padding: 0 4px 0 6px; margin-left: 2px; display: flex; align-items: center; background: #f1f1f1; }
  .navbar svg { width: 32px; height: 32px; }
  .navbar .apart { margin-left: 20px; }
  .navbar .drop { width: 20px; margin-right: 10px; }
  .navbar .drop.wide { width: 32px; margin-right: 2px; }
  .navbar .drop:last-child { margin-right: 0; }
  .navbar .caret { width: 12px; height: 9px; }

  .timeline { height: 100px; display: flex; align-items: flex-start; border-top: 8px solid #ccc; border-radius: 0 0 10px 10px; box-shadow: inset 0 2px #dcdcdc; }
  .playback { display: flex; padding: 34px 0 0 9px; }
  .playback button { width: 50px; height: 32px; }
  .playback svg, .feature svg { width: 32px; height: 32px; }
  .history { position: relative; display: flex; margin-left: 25px; padding-top: 32px; }
  .feature { width: 48px; display: flex; flex-direction: column; align-items: center; gap: 6px; }
  .feature .dim { opacity: 0.22; }
  .tick { align-self: stretch; height: 14px; background: linear-gradient(#ccc, #ccc) center / 4px 100% no-repeat, linear-gradient(#ccc, #ccc) bottom / 100% 4px no-repeat; }
  .feature:first-child .tick { margin-left: 24px; background-position: left, bottom; }
  .feature:nth-child(7) .tick { margin-right: 22px; background-position: right, bottom; }
  .marker { position: absolute; left: 228px; top: 20px; }
  .gear { margin: 34px 26px 0 auto; }
</style>
